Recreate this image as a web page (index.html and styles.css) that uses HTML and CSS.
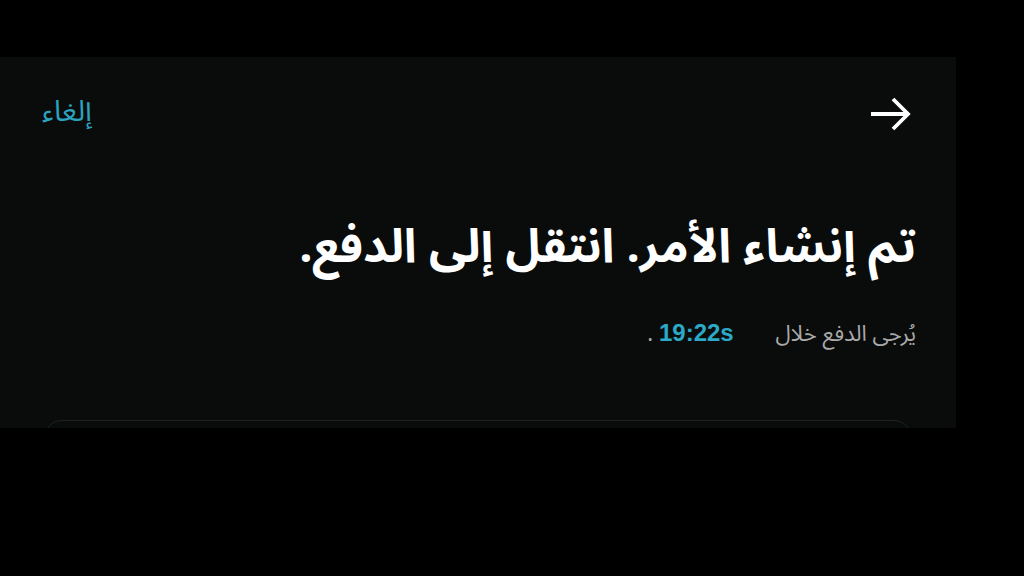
FILE: index.html
```html
<!DOCTYPE html>
<html lang="ar">
<head>
<meta charset="utf-8">
<link rel="stylesheet" href="styles.css">
</head>
<body>
<div class="panel" dir="rtl">
  <div class="header">
    <button class="back" aria-label="رجوع">
      <svg width="42" height="34" viewBox="0 0 42 34"><path d="M2 17 H39 M24 2 L39 17 L24 32" fill="none" stroke="#fff" stroke-width="3.8" stroke-linecap="butt" stroke-linejoin="miter"/></svg>
    </button>
    <span class="cancel">إلغاء</span>
  </div>
  <h1 class="title">تم إنشاء الأمر. انتقل إلى الدفع.</h1>
  <p class="sub">يُرجى الدفع خلال <span class="time" dir="ltr">19:22s</span> .</p>
  <div class="card"></div>
</div>
</body>
</html>
```
FILE: styles.css
```css
html, body {
  margin: 0;
  padding: 0;
  background: #000;
}
body {
  font-family: "Noto Sans Arabic", "Noto Sans", "DejaVu Sans", sans-serif;
}
.panel {
  margin-top: 57px;
  width: 956px;
  height: 371px;
  box-sizing: border-box;
  padding: 0 40px 0 42px;
  background: #0a0c0c;
  overflow: hidden;
  direction: rtl;
}
.header {
  display: flex;
  justify-content: space-between;
  align-items: center;
  height: 42px;
  margin-top: 36px;
  padding-right: 5px;
}
.back {
  background: none;
  border: 0;
  padding: 0;
  width: 42px;
  height: 42px;
  display: flex;
  align-items: center;
  justify-content: center;
}
.cancel {
  color: #2ba3bf;
  font-size: 29px;
  line-height: 42px;
  margin-top: -4px;
}
.title {
  margin: 0;
  margin-top: 82px;
  color: #fff;
  font-size: 47px;
  font-weight: 700;
  line-height: 60px;
}
.sub {
  margin: 0;
  margin-top: 41px;
  color: #a9a9a9;
  font-size: 22px;
  line-height: 30px;
}
.time {
  color: #2ba9c6;
  font-family: "Liberation Sans", Arial, sans-serif;
  font-weight: 700;
  font-size: 24px;
  letter-spacing: 2px;
  margin: 0 34px 0 0;
}
.card {
  margin: 71px 4px 0 2px;
  height: 120px;
  border: 1.5px solid #1d2225;
  border-radius: 18px;
  background: #0a0c0c;
}
```
